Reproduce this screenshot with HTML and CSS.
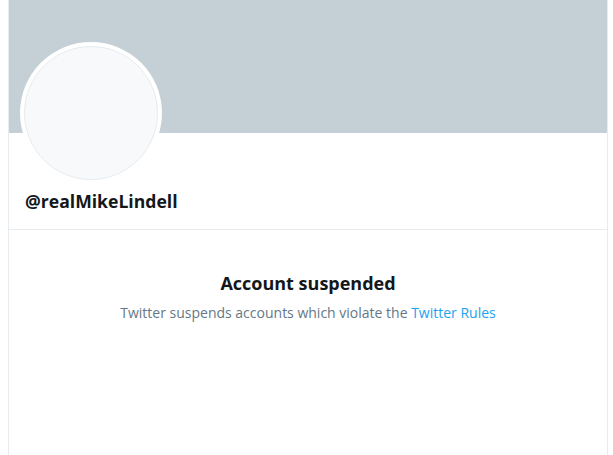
FILE: index.html
```html
<!DOCTYPE html>
<html lang="en">
<head>
<meta charset="utf-8">
<title>@realMikeLindell</title>
<link rel="stylesheet" href="styles.css">
</head>
<body>
<main class="column">
  <div class="banner"></div>
  <div class="profile">
    <div class="avatar"><div class="avatar-inner"></div></div>
    <h1 class="handle">@realMikeLindell</h1>
  </div>
  <section class="notice">
    <h2 class="notice-title">Account suspended</h2>
    <p class="notice-text">Twitter suspends accounts which violate the <a class="notice-link" href="#">Twitter Rules</a></p>
  </section>
</main>
</body>
</html>
```
FILE: styles.css
```css
html, body {
  margin: 0;
  padding: 0;
  background: #ffffff;
  height: 100%;
}
body {
  font-family: "Open Sans", "Noto Sans", "Liberation Sans", sans-serif;
  color: #14171a;
}
.column {
  box-sizing: border-box;
  margin-left: 8px;
  width: 600px;
  min-height: 100%;
  border-left: 1px solid #e6ecf0;
  border-right: 1px solid #e6ecf0;
  display: flex;
  flex-direction: column;
}
.banner {
  height: 133px;
  background: #c4cfd6;
}
.profile {
  display: flex;
  flex-direction: column;
  padding: 0 16px 0 11px;
  border-bottom: 1px solid #e6ecf0;
  height: 96px;
}
.avatar {
  margin-top: -91px;
  width: 142px;
  height: 142px;
  box-sizing: border-box;
  border-radius: 50%;
  background: #ffffff;
  padding: 4px;
}
.avatar-inner {
  box-sizing: border-box;
  width: 134px;
  height: 134px;
  border-radius: 50%;
  background: #f7f9fa;
  border: 1px solid #e6ecf0;
}
.handle {
  margin: 5px 0 0 5px;
  font-size: 17.6px;
  font-weight: 700;
  line-height: 24px;
  color: #14171a;
}
.notice {
  display: flex;
  flex-direction: column;
  align-items: center;
  padding-top: 40px;
}
.notice-title {
  margin: 0;
  font-size: 18px;
  font-weight: 700;
  line-height: 26px;
  color: #14171a;
}
.notice-text {
  margin: 7px 0 0;
  font-size: 14px;
  line-height: 20px;
  color: #657786;
}
.notice-link {
  color: #1da1f2;
  text-decoration: none;
}
```
